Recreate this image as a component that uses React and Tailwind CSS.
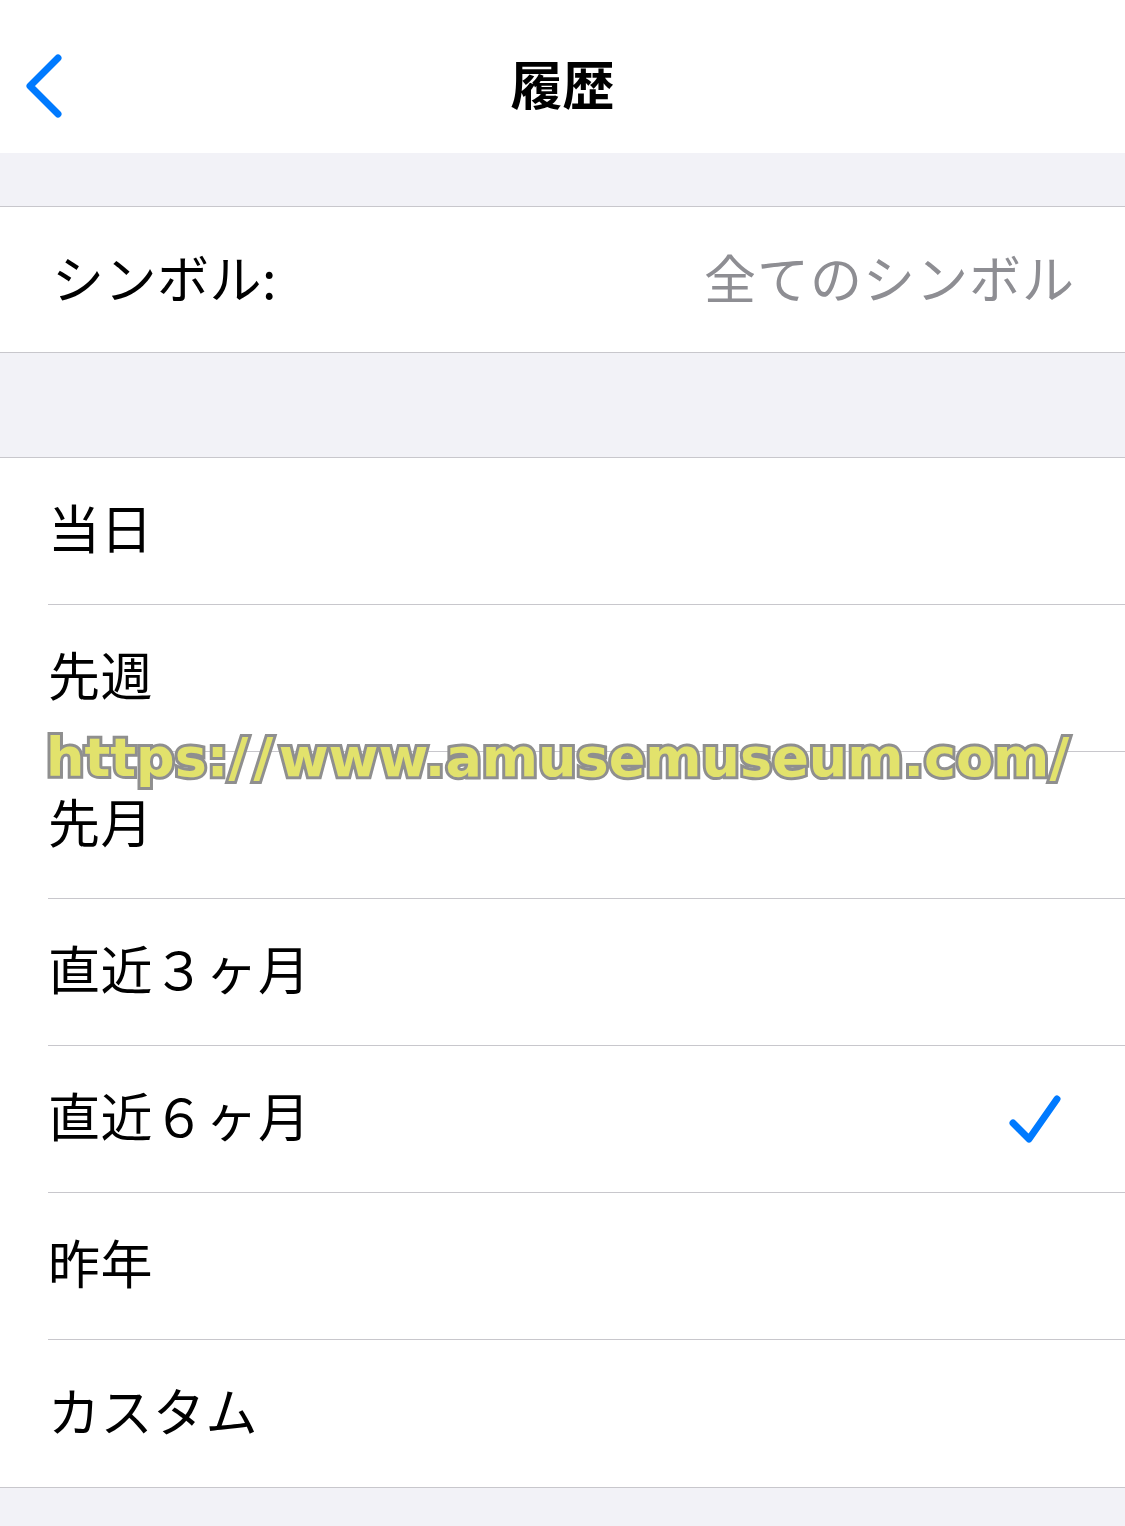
const jp = { fontFamily: '"Noto Sans CJK JP", "Noto Sans", sans-serif' };

const periods = ['当日', '先週', '先月', '直近３ヶ月', '直近６ヶ月', '昨年', 'カスタム'];

const BackIcon = () => (
  <svg width="44" height="68" viewBox="0 0 44 68" fill="none">
    <path d="M34 6 L6 34 L34 62" stroke="#007aff" strokeWidth="7" strokeLinecap="round" strokeLinejoin="round" />
  </svg>
);

const CheckIcon = () => (
  <svg width="56" height="52" viewBox="0 0 56 52" fill="none">
    <path d="M6 30 L22 46 L50 6" stroke="#007aff" strokeWidth="7" strokeLinecap="round" strokeLinejoin="round" />
  </svg>
);

const PeriodRow = ({ label, checked, last }) => (
  <div className="pl-[48px]">
    <div className={`h-[147px] flex items-center justify-between pr-[62px] ${last ? '' : 'border-b border-[#c8c7cc]'}`}>
      <span className="text-[52px] text-black tracking-[0.5px] pb-[8px]" style={jp}>{label}</span>
      {checked && <CheckIcon />}
    </div>
  </div>
);

export default function App() {
  return (
    <div className="relative w-[1125px] h-[1526px] bg-[#f2f2f7] overflow-hidden" style={jp}>
      <header className="h-[153px] bg-white relative flex items-center justify-center pt-[12px]">
        <div className="absolute left-[24px] top-[52px]">
          <BackIcon />
        </div>
        <h1 className="text-[52px] font-bold text-black">履歴</h1>
      </header>

      <div className="h-[53px]" />

      <div className="bg-white border-y border-[#c8c7cc]">
        <div className="h-[145px] flex items-center justify-between pl-[52px] pr-[50px] pb-[6px]">
          <span className="text-[52px] text-black tracking-[0.5px]">シンボル:</span>
          <span className="text-[52px] text-[#8e8e93] tracking-[1px]">全てのシンボル</span>
        </div>
      </div>

      <div className="h-[105px]" />

      <div className="bg-white border-y border-[#c8c7cc] -mt-px">
        {periods.map((p, i) => (
          <PeriodRow key={p} label={p} checked={p === '直近６ヶ月'} last={i === periods.length - 1} />
        ))}
      </div>

      <div
        className="absolute left-[46px] top-[728px] text-[54px] leading-[1.1] font-bold text-[#e2e26c] whitespace-nowrap tracking-[0px] pointer-events-none [paint-order:stroke_fill] [-webkit-text-stroke:6px_#8f8f8f]"
        style={{ fontFamily: '"DejaVu Sans", Verdana, sans-serif' }}
      >
        https:/&#8202;/&#8202;www.amusemuseum.com/
      </div>
    </div>
  );
}
